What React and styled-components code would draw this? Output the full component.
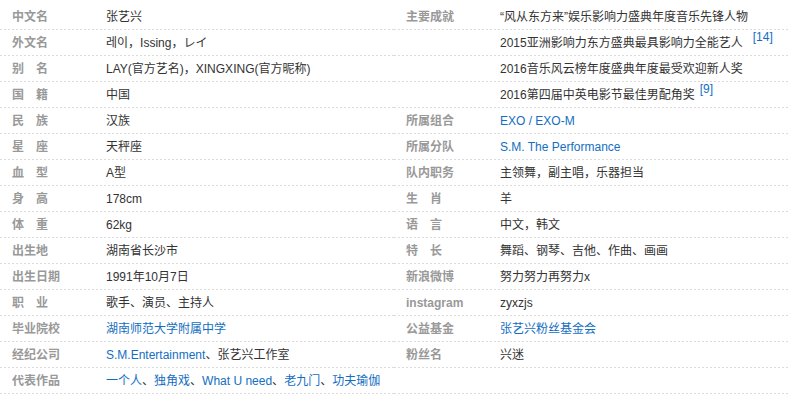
import React from "react";
import styled, { createGlobalStyle } from "styled-components";

const Global = createGlobalStyle`
  html, body { margin: 0; padding: 0; background: #fff; }
  body { font-family: "Liberation Sans", Arial, "Noto Sans CJK SC", sans-serif; font-size: 12px; color: #333; }
`;

const Info = styled.div`
  display: flex;
  width: 788px;
  padding-top: 4px;
`;

const Column = styled.dl`
  margin: 0;
  width: 394px;
  display: flex;
  flex-direction: column;
`;

const Item = styled.div`
  display: flex;
  height: 24px;
  line-height: 25px;
  padding-top: 1px;
  padding-bottom: 1px;
  background: linear-gradient(to right, #dcdcdc 50%, transparent 50%) left bottom / 4px 1px repeat-x;
  white-space: nowrap;
`;

const Name = styled.dt`
  box-sizing: border-box;
  width: 106px;
  padding-left: 12px;
  font-weight: bold;
  color: #999;
  flex: none;
`;

const Spread = styled.span`
  letter-spacing: 12px;
`;

const Value = styled.dd`
  margin: 0;
  color: #333;
  flex: 1;
`;

const Link = styled.a`
  color: #136ec2;
  text-decoration: none;
`;

const Sup = styled.sup`
  font-size: 12px;
  line-height: 0;
  vertical-align: 6px;
  color: #136ec2;
  margin-left: ${(p) => p.$gap}px;
`;

function Label({ text }) {
  if (text.length === 2 && /[\u4e00-\u9fff]{2}/.test(text)) {
    return (
      <Name>
        <Spread>{text[0]}</Spread>
        {text[1]}
      </Name>
    );
  }
  return <Name>{text}</Name>;
}

const left = [
  ["中文名", "张艺兴"],
  ["外文名", "레이，Issing，レイ"],
  ["别名", "LAY(官方艺名)，XINGXING(官方昵称)"],
  ["国籍", "中国"],
  ["民族", "汉族"],
  ["星座", "天秤座"],
  ["血型", "A型"],
  ["身高", "178cm"],
  ["体重", "62kg"],
  ["出生地", "湖南省长沙市"],
  ["出生日期", "1991年10月7日"],
  ["职业", "歌手、演员、主持人"],
  [
    "毕业院校",
    <Link key="a">湖南师范大学附属中学</Link>,
  ],
  [
    "经纪公司",
    <>
      <Link>S.M.Entertainment</Link>、张艺兴工作室
    </>,
  ],
  [
    "代表作品",
    <>
      <Link>一个人</Link>、<Link>独角戏</Link>、<Link>What U need</Link>、
      <Link>老九门</Link>、<Link>功夫瑜伽</Link>
    </>,
  ],
];

const right = [
  ["主要成就", "“风从东方来”娱乐影响力盛典年度音乐先锋人物"],
  [
    "",
    <>
      2015亚洲影响力东方盛典最具影响力全能艺人<Sup $gap={10}>[14]</Sup>
    </>,
  ],
  ["", "2016音乐风云榜年度盛典年度最受欢迎新人奖"],
  [
    "",
    <>
      2016第四届中英电影节最佳男配角奖<Sup $gap={5}>[9]</Sup>
    </>,
  ],
  ["所属组合", <Link key="b">EXO / EXO-M</Link>],
  ["所属分队", <Link key="c">S.M. The Performance</Link>],
  ["队内职务", "主领舞，副主唱，乐器担当"],
  ["生肖", "羊"],
  ["语言", "中文，韩文"],
  ["特长", "舞蹈、钢琴、吉他、作曲、画画"],
  ["新浪微博", "努力努力再努力x"],
  ["instagram", "zyxzjs"],
  ["公益基金", <Link key="d">张艺兴粉丝基金会</Link>],
  ["粉丝名", "兴迷"],
  ["", ""],
];

function Block({ rows }) {
  return (
    <Column>
      {rows.map(([k, v], i) => (
        <Item key={i}>
          <Label text={k} />
          <Value>{v}</Value>
        </Item>
      ))}
    </Column>
  );
}

export default function App() {
  return (
    <>
      <Global />
      <Info>
        <Block rows={left} />
        <Block rows={right} />
      </Info>
    </>
  );
}
